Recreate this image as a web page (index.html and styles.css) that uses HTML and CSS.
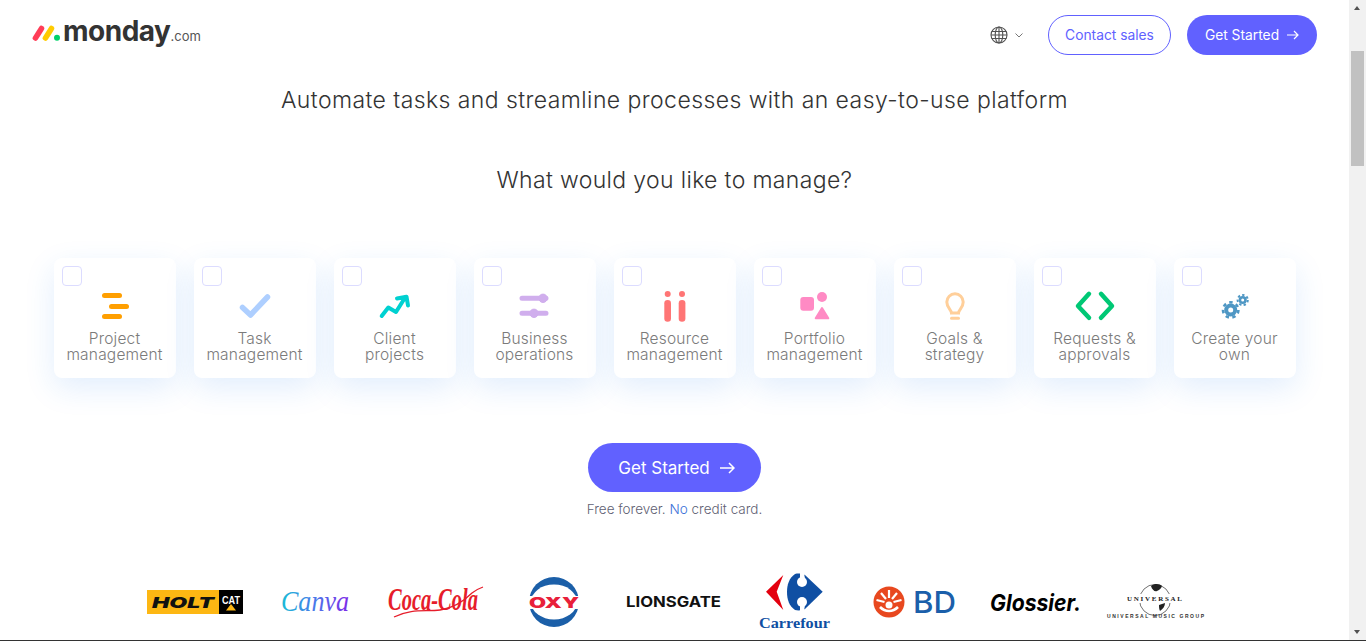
FILE: index.html
```html
<!DOCTYPE html>
<html lang="en">
<head>
    <meta charset="UTF-8">
    <meta name="viewport" content="width=device-width, initial-scale=1.0">
    <title>monday.com</title>
    <link rel="stylesheet" href="styles.css">
</head>
<body>
    <div class="page">
        <main class="main">
            <header class="header">
                <a class="logo" href="#">
                    <svg class="logo-mark" viewBox="0 0 28 16" width="28" height="16">
                        <line x1="3.5" y1="13" x2="9.5" y2="3.5" stroke="#ff3d57" stroke-width="5.5" stroke-linecap="round"/>
                        <line x1="13.5" y1="13" x2="19.5" y2="3.5" stroke="#ffcb00" stroke-width="5.5" stroke-linecap="round"/>
                        <circle cx="25" cy="12.8" r="3" fill="#00d26a"/>
                    </svg>
                    <span class="logo-name">monday</span><span class="logo-com">.com</span>
                </a>
                <nav class="nav">
                    <div class="lang">
                        <svg viewBox="0 0 18 18" width="18" height="18" fill="none" stroke="#505050" stroke-width="1.1">
                            <circle cx="9" cy="9" r="8"/>
                            <ellipse cx="9" cy="9" rx="3.8" ry="8"/>
                            <path d="M9 1v16M1.600 5.500h14.800M1 9h16M1.600 12.500h14.800"/>
                        </svg>
                        <svg viewBox="0 0 8 5" width="8" height="5" fill="none" stroke="#777" stroke-width="1"><path d="M.5.5 4 4 7.5.5"/></svg>
                    </div>
                    <a class="btn btn-outline" href="#">Contact sales</a>
                    <a class="btn btn-solid" href="#">Get Started
                        <svg viewBox="0 0 12 10" width="12" height="10" fill="none" stroke="#fff" stroke-width="1.2"><path d="M0 5h11M7 1l4 4-4 4"/></svg>
                    </a>
                </nav>
            </header>

            <h2 class="tagline">Automate tasks and streamline processes with an easy-to-use platform</h2>
            <h2 class="question">What would you like to manage?</h2>

            <div class="cards">
                <div class="card">
                    <span class="check"></span>
                    <svg class="icon" viewBox="0 0 40 30" fill="#ff9f00">
                        <rect x="7" y="2" width="20" height="5" rx="2.5"/>
                        <rect x="14" y="13" width="20" height="5" rx="2.5"/>
                        <rect x="7" y="23" width="20" height="5" rx="2.5"/>
                    </svg>
                    <span class="label">Project management</span>
                </div>
                <div class="card">
                    <span class="check"></span>
                    <svg class="icon" viewBox="0 0 40 30" fill="none" stroke="#aecfff" stroke-width="5.5" stroke-linecap="round" stroke-linejoin="round">
                        <path d="M7.5 16.5 15.5 24 32.5 6"/>
                    </svg>
                    <span class="label">Task management</span>
                </div>
                <div class="card">
                    <span class="check"></span>
                    <svg class="icon" viewBox="0 0 40 30" fill="none" stroke="#00d1d1" stroke-width="4" stroke-linecap="round" stroke-linejoin="round">
                        <path d="M6.7 25 13.3 16.5 21 21 29.5 7.5M22 7.5 31.5 5.7 33 14.5"/>
                    </svg>
                    <span class="label">Client projects</span>
                </div>
                <div class="card">
                    <span class="check"></span>
                    <svg class="icon" viewBox="0 0 40 30" fill="#d0aeed" stroke="#d0aeed">
                        <path d="M7 7.3h24M7 22.3h24" stroke-width="5" stroke-linecap="round"/>
                        <circle cx="28" cy="7.3" r="4.2"/>
                        <circle cx="19" cy="22.3" r="4.2"/>
                    </svg>
                    <span class="label">Business operations</span>
                </div>
                <div class="card">
                    <span class="check"></span>
                    <svg class="icon" viewBox="0 0 40 30" fill="#ff7575">
                        <circle cx="12.7" cy="2.9" r="3"/>
                        <circle cx="27" cy="2.9" r="3"/>
                        <rect x="9.3" y="9" width="6.7" height="21.7" rx="3.3"/>
                        <rect x="23.7" y="9" width="6.7" height="21.7" rx="3.3"/>
                    </svg>
                    <span class="label">Resource management</span>
                </div>
                <div class="card">
                    <span class="check"></span>
                    <svg class="icon" viewBox="0 0 40 30" fill="#ff8ac4">
                        <rect x="5.3" y="6" width="13.7" height="13.7" rx="3"/>
                        <circle cx="27" cy="6" r="5"/>
                        <path d="M27 17 33.3 27.3H20.7Z" stroke="#ff8ac4" stroke-width="2" stroke-linejoin="round"/>
                    </svg>
                    <span class="label">Portfolio management</span>
                </div>
                <div class="card">
                    <span class="check"></span>
                    <svg class="icon" viewBox="0 0 40 30" fill="none" stroke="#ffcf9a" stroke-width="3" stroke-linecap="round">
                        <path d="M16.5 22c0-3-4.700-5-4.700-11a8.200 8.200 0 0 1 16.400 0c0 6-4.700 8-4.700 11Z"/>
                        <path d="M16.5 27.300h7"/>
                    </svg>
                    <span class="label">Goals &amp; strategy</span>
                </div>
                <div class="card">
                    <span class="check"></span>
                    <svg class="icon" viewBox="0 0 40 30" fill="none" stroke="#00c875" stroke-width="4.500" stroke-linecap="round" stroke-linejoin="round">
                        <path d="M14 2.800 3 15 14 26.800M26 2.800 37 15 26 26.800"/>
                    </svg>
                    <span class="label">Requests &amp; approvals</span>
                </div>
                <div class="card">
                    <span class="check"></span>
                    <svg class="icon" viewBox="0 0 40 30" fill="none" stroke="#4f97c4">
                        <circle cx="15.700" cy="19" r="4.500" stroke-width="4"/>
                        <circle cx="15.700" cy="19" r="7.700" stroke-width="2.600" stroke-dasharray="3.450 3.460"/>
                        <circle cx="27.700" cy="9" r="2.800" stroke-width="2.600"/>
                        <circle cx="27.700" cy="9" r="5.100" stroke-width="2" stroke-dasharray="2.290 2.290"/>
                    </svg>
                    <span class="label">Create your own</span>
                </div>
            </div>

            <div class="cta">
                <a class="btn-large" href="#">Get Started
                    <svg viewBox="0 0 15 12" width="15" height="12" fill="none" stroke="#fff" stroke-width="1.500"><path d="M0 6h14M9 1l5 5-5 5"/></svg>
                </a>
                <p class="free">Free forever. <span class="free-no">No</span> credit card.</p>
            </div>

            <div class="brands">
                <!-- holt cat -->
                <svg class="brand" viewBox="0 0 134 60" width="134" height="60">
                    <rect x="0" y="17" width="72" height="24" fill="#fdb713"/>
                    <rect x="72" y="17" width="24" height="24" fill="#000"/>
                    <text class="holt-text" x="5" y="34.500" textLength="62" lengthAdjust="spacingAndGlyphs">HOLT</text>
                    <text class="cat-text" x="75" y="31" textLength="18" lengthAdjust="spacingAndGlyphs">CAT</text>
                    <path d="M79 37.500 84 31 89 37.500Z" fill="#fdb713"/>
                </svg>
                <!-- canva -->
                <svg class="brand" viewBox="0 0 107 60" width="107" height="60">
                    <defs>
                        <linearGradient id="canvaFill" x1="0" y1="0" x2="1" y2="0">
                            <stop offset="0" stop-color="#19bcd6"/>
                            <stop offset=".5" stop-color="#4a78ea"/>
                            <stop offset="1" stop-color="#7d2ae8"/>
                        </linearGradient>
                    </defs>
                    <text class="canva-text" x="0" y="38" textLength="68" lengthAdjust="spacingAndGlyphs" fill="url(#canvaFill)">Canva</text>
                </svg>
                <!-- coca cola -->
                <svg class="brand" viewBox="0 0 141 60" width="141" height="60">
                    <text class="coke-text" x="0" y="37" textLength="90" lengthAdjust="spacingAndGlyphs">Coca-Cola</text>
                    <path d="M6 44C24 35 38 39 52 37 66 35 76 28 84 20 88 17 92 15 95 14" fill="none" stroke="#e61d2b" stroke-width="1.300"/>
                </svg>
                <!-- oxy -->
                <svg class="brand" viewBox="0 0 97 60" width="97" height="60">
                    <circle cx="25" cy="29" r="25" fill="#1b5fa8"/>
                    <ellipse cx="25" cy="29" rx="23" ry="17.500" fill="#fff"/>
                    <rect x="0" y="23" width="50" height="13" fill="#fff"/>
                    <text class="oxy-text" x="0" y="34.500" textLength="50" lengthAdjust="spacingAndGlyphs">OXY</text>
                </svg>
                <!-- lionsgate -->
                <svg class="brand" viewBox="0 0 133 60" width="133" height="60">
                    <text class="lions-text" x="0" y="34" textLength="95" lengthAdjust="spacingAndGlyphs">LIONSGATE</text>
                </svg>
                <!-- carrefour -->
                <svg class="brand" viewBox="0 0 115 60" width="115" height="60">
                    <path d="M24.300 2 7 18.700 24.300 37 17.700 18.700Z" fill="#e3000f"/>
                    <path d="M36 1C30 5 28 12 28 19 28 26 30 33 36 37 40 38 44 37 46 36L63.700 18.700 46 2C44 1 40 0 36 1Z" fill="#0f4fa3"/>
                    <circle cx="43" cy="9" r="5" fill="#fff"/>
                    <circle cx="43" cy="29" r="5" fill="#fff"/>
                    <path d="M41 0h4l1 6h-5ZM41 38h4l1-6h-5Z" fill="#fff"/>
                    <text class="carrefour-text" x="0" y="55" textLength="71" lengthAdjust="spacingAndGlyphs">Carrefour</text>
                </svg>
                <!-- bd -->
                <svg class="brand" viewBox="0 0 116 60" width="116" height="60">
                    <circle cx="15" cy="29" r="15.500" fill="#e8481f"/>
                    <path d="M15 17v8M7 20l5 6M23 20l-5 6M2.500 27l8 2M27.500 27l-8 2" stroke="#fff" stroke-width="2.200"/>
                    <circle cx="15" cy="32" r="3.500" fill="#fff"/>
                    <path d="M6 34c3 3 5 4 9 4s6-1 9-4" fill="none" stroke="#fff" stroke-width="2.600"/>
                    <text class="bd-text" x="39" y="39.500" textLength="43" lengthAdjust="spacingAndGlyphs">BD</text>
                </svg>
                <!-- glossier -->
                <svg class="brand" viewBox="0 0 117 60" width="117" height="60">
                    <text class="gloss-text" x="0" y="37.500" textLength="91" lengthAdjust="spacingAndGlyphs">Glossier.</text>
                </svg>
                <!-- universal -->
                <svg class="brand" viewBox="0 0 97 60" width="97" height="60">
                    <circle cx="48" cy="27" r="15.500" fill="none" stroke="#333" stroke-width=".7"/>
                    <path d="M44 13c4-3 9-2 11 0-1 3-3 4-5 5-2 1-5-1-6-5ZM52 32l6-2c0 3-2 6-5 8-1-2-1-4-1-6Z" fill="#222"/>
                    <rect x="18" y="21" width="60" height="9" fill="#fff"/>
                    <text class="univ-text" x="20" y="28" textLength="55" lengthAdjust="spacing">UNIVERSAL</text>
                    <text class="umg-text" x="0" y="45" textLength="97" lengthAdjust="spacing">UNIVERSAL MUSIC GROUP</text>
                </svg>
            </div>
        </main>
        <aside class="scrollbar">
            <span class="scroll-up"></span>
            <span class="scroll-thumb"></span>
            <span class="scroll-down"></span>
        </aside>
    </div>
</body>
</html>
```

FILE: styles.css
```css
* {
    box-sizing: border-box;
}

html, body {
    margin: 0;
    height: 100%;
    overflow: hidden;
}

body {
    background-color: #fff;
    font-family: Inter, "Noto Sans", sans-serif;
    font-weight: 300;
    color: #333;
}

a {
    text-decoration: none;
}

.page {
    display: flex;
    height: 641px;
    border-bottom: 1px solid #333;
}

.main {
    flex: 1;
    min-width: 0;
}

/* header */
.header {
    display: flex;
    justify-content: space-between;
    align-items: center;
    height: 70px;
    padding: 0 32px;
}

.logo {
    display: flex;
    align-items: baseline;
    margin-bottom: 8px;
    color: #333;
}

.logo-mark {
    margin-right: 3px;
}

.logo-name {
    font-size: 28px;
    font-weight: 700;
    letter-spacing: -0.5px;
}

.logo-com {
    font-size: 13px;
    font-weight: 400;
    color: #555;
}

.nav {
    display: flex;
    align-items: center;
}

.lang {
    display: flex;
    align-items: center;
    gap: 7px;
    margin-right: 25px;
}

.btn {
    display: flex;
    align-items: center;
    justify-content: center;
    height: 40px;
    border-radius: 20px;
    font-size: 13.800px;
    font-weight: 400;
}

.btn-outline {
    width: 123px;
    border: 1px solid #6161ff;
    color: #6161ff;
    margin-right: 16px;
}

.btn-solid {
    width: 130px;
    gap: 8px;
    background-color: #6161ff;
    color: #fff;
}

/* headings */
.tagline, .question {
    margin: 0;
    text-align: center;
    font-weight: 300;
    font-size: 23px;
    line-height: 32px;
    color: #333;
}

.tagline {
    padding-top: 14px;
    letter-spacing: 0.42px;
}

.question {
    padding-top: 48px;
    letter-spacing: 0.35px;
}

/* cards */
.cards {
    display: flex;
    justify-content: center;
    gap: 18px;
    margin-top: 62px;
}

.card {
    position: relative;
    display: flex;
    flex-direction: column;
    align-items: center;
    width: 122px;
    height: 120px;
    padding-top: 33px;
    background-color: #fff;
    border-radius: 8px;
    box-shadow: 0 10px 30px rgba(29, 120, 240, 0.13);
}

.check {
    position: absolute;
    top: 8px;
    left: 8px;
    width: 20px;
    height: 20px;
    border: 1px solid #dcdcff;
    border-radius: 4px;
}

.icon {
    width: 40px;
    height: 30px;
    overflow: visible;
}

.label {
    margin-top: 10px;
    width: 104px;
    text-align: center;
    font-size: 15.500px;
    letter-spacing: 0.2px;
    line-height: 16px;
    color: #7b7b7b;
}

/* call to action */
.cta {
    display: flex;
    flex-direction: column;
    align-items: center;
    margin-top: 65px;
}

.btn-large {
    display: flex;
    align-items: center;
    justify-content: center;
    gap: 10px;
    width: 173px;
    height: 49px;
    padding-left: 4px;
    border-radius: 25px;
    background-color: #6161ff;
    color: #fff;
    font-size: 17px;
    font-weight: 400;
}

.free {
    margin: 9px 0 0;
    font-size: 13.500px;
    font-weight: 300;
    line-height: 16px;
    color: #5f5f73;
}

.free-no {
    color: #3b6fd8;
}

/* brand logos */
.brands {
    display: flex;
    margin-top: 56px;
    padding-left: 147px;
}

.brand {
    flex: none;
    overflow: visible;
}

.holt-text {
    font: italic 900 15px Inter, sans-serif;
    fill: #111;
}

.cat-text {
    font: 800 11px "Liberation Sans", sans-serif;
    fill: #fff;
}

.canva-text {
    font: italic 400 30px "Liberation Serif", serif;
}

.coke-text {
    font: italic 700 32px "Liberation Serif", serif;
    fill: #e61d2b;
}

.oxy-text {
    font: 900 14px Inter, sans-serif;
    fill: #e8203a;
}

.lions-text {
    font: 700 14.500px Inter, sans-serif;
    fill: #111;
}

.carrefour-text {
    font: 700 15px "Liberation Serif", serif;
    fill: #0f4fa3;
}

.bd-text {
    font: 500 30px Inter, sans-serif;
    fill: #1b5faa;
}

.gloss-text {
    font: italic 700 23px Inter, sans-serif;
    fill: #000;
}

.univ-text {
    font: 700 7px "Liberation Serif", serif;
    fill: #222;
}

.umg-text {
    font: 700 5px "Liberation Sans", sans-serif;
    fill: #333;
}

/* drawn scrollbar, the page itself does not scroll */
.scrollbar {
    position: relative;
    flex: none;
    width: 17px;
    background-color: #f1f1f1;
}

.scroll-up, .scroll-down {
    position: absolute;
    left: 5px;
    border-left: 3.500px solid transparent;
    border-right: 3.500px solid transparent;
}

.scroll-up {
    top: 6px;
    border-bottom: 4px solid #505050;
}

.scroll-down {
    bottom: 6px;
    border-top: 4px solid #505050;
}

.scroll-thumb {
    position: absolute;
    top: 51px;
    left: 2px;
    width: 13px;
    height: 115px;
    background-color: #c1c1c1;
}
```
